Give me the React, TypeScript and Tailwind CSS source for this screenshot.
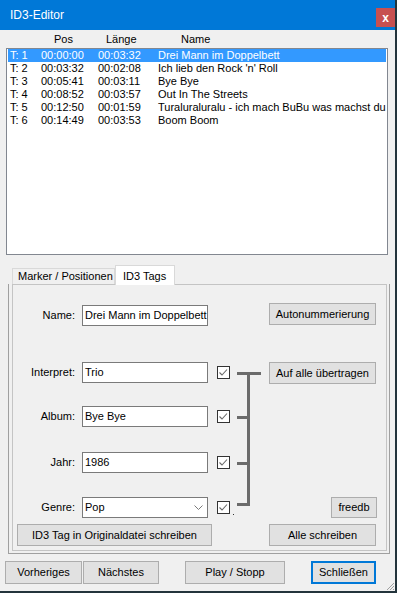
import React from "react";

const font = { fontFamily: '"Liberation Sans", Arial, sans-serif' };

const rows = [
  ["T: 1", "00:00:00", "00:03:32", "Drei Mann im Doppelbett"],
  ["T: 2", "00:03:32", "00:02:08", "Ich lieb den Rock 'n' Roll"],
  ["T: 3", "00:05:41", "00:03:11", "Bye Bye"],
  ["T: 4", "00:08:52", "00:03:57", "Out In The Streets"],
  ["T: 5", "00:12:50", "00:01:59", "Turaluraluralu - ich mach BuBu was machst du"],
  ["T: 6", "00:14:49", "00:03:53", "Boom Boom"],
];

function Btn({ children, className = "" }: { children: React.ReactNode; className?: string }) {
  return (
    <div
      className={
        "flex shrink-0 items-center justify-center border border-[#adadad] bg-[#e1e1e1] text-[11px] leading-none text-black whitespace-nowrap " +
        className
      }
    >
      {children}
    </div>
  );
}

function Check() {
  return (
    <div className="ml-[9px] h-[13px] w-[13px] shrink-0 border border-[#333333] bg-white">
      <svg width="11" height="11" viewBox="0 0 11 11">
        <polyline points="1.5,5.5 4,8 9,2.5" fill="none" stroke="#6a6a6a" strokeWidth="1.1" />
      </svg>
    </div>
  );
}

function Field({ label, value, combo, mt }: { label: string; value: string; combo?: boolean; mt: string }) {
  return (
    <div className={"flex h-[21px] items-center " + mt}>
      <div className="w-[62px] shrink-0 text-right text-[11px] leading-none">{label}</div>
      <div className="ml-[7px] flex h-[21px] w-[126px] shrink-0 items-center overflow-hidden whitespace-nowrap border border-[#7a7a7a] bg-white pl-[2px] text-[11px] leading-none">
        <span className="flex-1">{value}</span>
        {combo && (
          <svg width="9" height="6" viewBox="0 0 9 6" className="mr-[4px]">
            <polyline points="0.5,0.5 4.5,4.5 8.5,0.5" fill="none" stroke="#7a7a7a" strokeWidth="1" />
          </svg>
        )}
      </div>
      <Check />
    </div>
  );
}

export default function App() {
  return (
    <div
      className="flex h-[593px] w-[397px] flex-col overflow-hidden border-b-2 border-r-2 border-[#23343c] bg-[#f0f0f0] text-black"
      style={font}
    >
      {/* Title bar */}
      <div className="flex h-[30px] shrink-0 items-start bg-[#0078d7]">
        <div className="mt-[9px] pl-[10px] text-[12px] leading-[12px] text-white">ID3-Editor</div>
        <div className="ml-auto mt-[8px] flex h-[19px] w-[19px] items-center justify-center bg-[#c75050] text-[12px] font-bold leading-none text-white">
          x
        </div>
      </div>

      {/* Column headers */}
      <div className="flex h-[18px] shrink-0 items-center text-[11px] leading-none">
        <span className="ml-[54px] w-[52px]">Pos</span>
        <span className="w-[75px]">Länge</span>
        <span>Name</span>
      </div>

      {/* List */}
      <div className="ml-[6px] h-[207px] w-[382px] shrink-0 border border-[#828790] bg-white px-[1px]">
        {rows.map((r, i) => (
          <div
            key={i}
            className={
              "flex h-[13px] items-center whitespace-nowrap text-[11px] leading-none " +
              (i === 0 ? "bg-[#3399ff] text-white" : "text-black")
            }
          >
            <span className="w-[33px] shrink-0 pl-[2px]">{r[0]}</span>
            <span className="w-[57px] shrink-0">{r[1]}</span>
            <span className="w-[60px] shrink-0">{r[2]}</span>
            <span>{r[3]}</span>
          </div>
        ))}
      </div>

      {/* Tabs */}
      <div className="ml-[12px] mt-[10px] flex h-[19px] shrink-0 items-end text-[11px] leading-none">
        <div className="flex h-[16px] w-[103px] items-center border-l border-r border-t border-[#d9d9d9] bg-[#f0f0f0] pl-[5px]">
          Marker / Positionen
        </div>
        <div className="relative z-10 mb-[-1px] flex h-[20px] w-[60px] items-start border-l border-r border-t border-[#d9d9d9] bg-white pl-[7px] pt-[5px]">
          ID3 Tags
        </div>
      </div>

      {/* Outer frame + tab panel */}
      <div className="ml-[8px] w-[382px] shrink-0 border-b border-l border-r border-[#a0a0a0] pb-[2px] pl-[3px] pr-[2px]">
        <div className="flex h-[267px] w-[375px] flex-col border border-[#c4c4c4] text-[11px]">
          {/* Name row */}
          <div className="mt-[18px] flex h-[23px] items-start">
            <div className="mt-[2px] flex h-[21px] items-center">
              <div className="w-[62px] shrink-0 text-right leading-none">Name:</div>
              <div className="ml-[7px] flex h-[21px] w-[126px] shrink-0 items-center overflow-hidden whitespace-nowrap border border-[#7a7a7a] bg-white pl-[2px] leading-none">
                Drei Mann im Doppelbett
              </div>
            </div>
            <Btn className="ml-[61px] h-[22px] w-[107px]">Autonummerierung</Btn>
          </div>

          {/* Fields block */}
          <div className="mt-[36px] flex h-[156px] items-start">
            <div className="flex flex-col">
              <Field label="Interpret:" value="Trio" mt="" />
              <Field label="Album:" value="Bye Bye" mt="mt-[23px]" />
              <Field label="Jahr:" value="1986" mt="mt-[25px]" />
              <Field label="Genre:" value="Pop" combo mt="mt-[24px]" />
            </div>
            <svg width="39" height="156" viewBox="0 0 39 156" className="shrink-0">
              <g stroke="#6b6b6b" strokeWidth="3" fill="none">
                <line x1="7" y1="11.5" x2="31" y2="11.5" />
                <line x1="18.5" y1="10" x2="18.5" y2="144" />
                <line x1="7" y1="55.5" x2="18.5" y2="55.5" />
                <line x1="7" y1="101.5" x2="18.5" y2="101.5" />
                <line x1="7" y1="142.5" x2="20" y2="142.5" />
              </g>
              <rect x="3" y="152" width="1" height="1" fill="#333" />
            </svg>
            <div className="flex h-[156px] w-[107px] flex-col items-end justify-between">
              <Btn className="h-[22px] w-[107px]">Auf alle übertragen</Btn>
              <Btn className="mr-[-1px] h-[21px] w-[46px]">freedb</Btn>
            </div>
          </div>

          {/* Bottom buttons in panel */}
          <div className="mt-[6px] flex h-[22px] items-start pl-[4px]">
            <Btn className="h-[22px] w-[195px]">ID3 Tag in Originaldatei schreiben</Btn>
            <Btn className="ml-[57px] h-[22px] w-[107px]">Alle schreiben</Btn>
          </div>
        </div>
      </div>

      {/* Bottom button bar */}
      <div className="relative flex-1">
        <div className="ml-[5px] mt-[7px] flex items-start">
          <Btn className="h-[23px] w-[77px]">Vorheriges</Btn>
          <Btn className="ml-[1px] h-[23px] w-[76px]">Nächstes</Btn>
          <Btn className="ml-[26px] h-[23px] w-[100px]">Play / Stopp</Btn>
          <div className="ml-[26px] flex h-[23px] w-[65px] items-center justify-center border-2 border-[#0078d7] bg-[#e1e1e1] text-[11px] leading-none">
            Schließen
          </div>
        </div>
        <svg width="10" height="10" viewBox="0 0 10 10" className="absolute bottom-[0px] right-[0px]">
          <g fill="#a0a0a0">
            <rect x="8" y="2" width="1" height="1" />
            <rect x="7" y="3" width="1" height="1" />
            <rect x="6" y="4" width="1" height="1" />
            <rect x="5" y="5" width="1" height="1" />
            <rect x="4" y="6" width="1" height="1" />
            <rect x="3" y="7" width="1" height="1" />
            <rect x="2" y="8" width="1" height="1" />
            <rect x="8" y="5" width="1" height="1" />
            <rect x="7" y="6" width="1" height="1" />
            <rect x="6" y="7" width="1" height="1" />
            <rect x="5" y="8" width="1" height="1" />
            <rect x="8" y="8" width="1" height="1" />
          </g>
        </svg>
      </div>
    </div>
  );
}
